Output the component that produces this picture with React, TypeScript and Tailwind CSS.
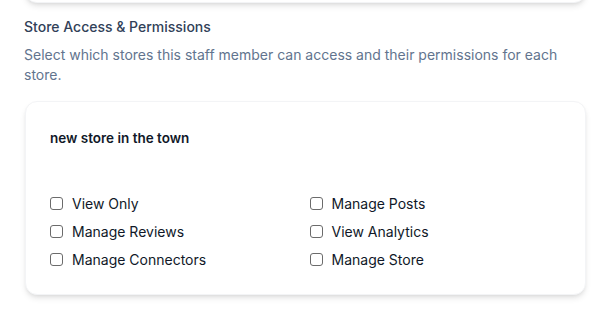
import React from 'react';

const permissions = [
  'View Only',
  'Manage Posts',
  'Manage Reviews',
  'View Analytics',
  'Manage Connectors',
  'Manage Store',
];

function PermissionCheckbox({ label }: { label: string }) {
  return (
    <label className="flex items-center gap-[9px] h-5 text-[14px] text-gray-900">
      <input
        type="checkbox"
        className="appearance-none w-[13px] h-[13px] rounded-[3px] border border-[#6b6b6b] bg-white shrink-0"
      />
      <span>{label}</span>
    </label>
  );
}

export default function App() {
  return (
    <div
      className="w-[601px] h-[311px] bg-white overflow-hidden pl-6 pr-[14px]"
      style={{ fontFamily: 'Inter, "Noto Sans", sans-serif' }}
    >
      {/* previous section card, cut off at the top */}
      <div className="-mt-5 h-[23px] mx-px rounded-xl bg-white border border-gray-100 shadow-md" />

      <h3 className="mt-[14px] text-[14px] leading-5 font-medium text-slate-700">
        Store Access &amp; Permissions
      </h3>
      <p className="mt-2 text-[14px] leading-5 text-slate-500">
        Select which stores this staff member can access and their permissions for each store.
      </p>

      <div className="mt-4 mx-px rounded-xl border border-gray-100 bg-white px-6 pt-6 pb-[25px] shadow-md">
        <div className="text-[13.5px] leading-6 font-semibold text-gray-900">new store in the town</div>
        <div className="mt-[43px] grid grid-cols-2 gap-x-2 gap-y-2">
          {permissions.map((p) => (
            <PermissionCheckbox key={p} label={p} />
          ))}
        </div>
      </div>
    </div>
  );
}
